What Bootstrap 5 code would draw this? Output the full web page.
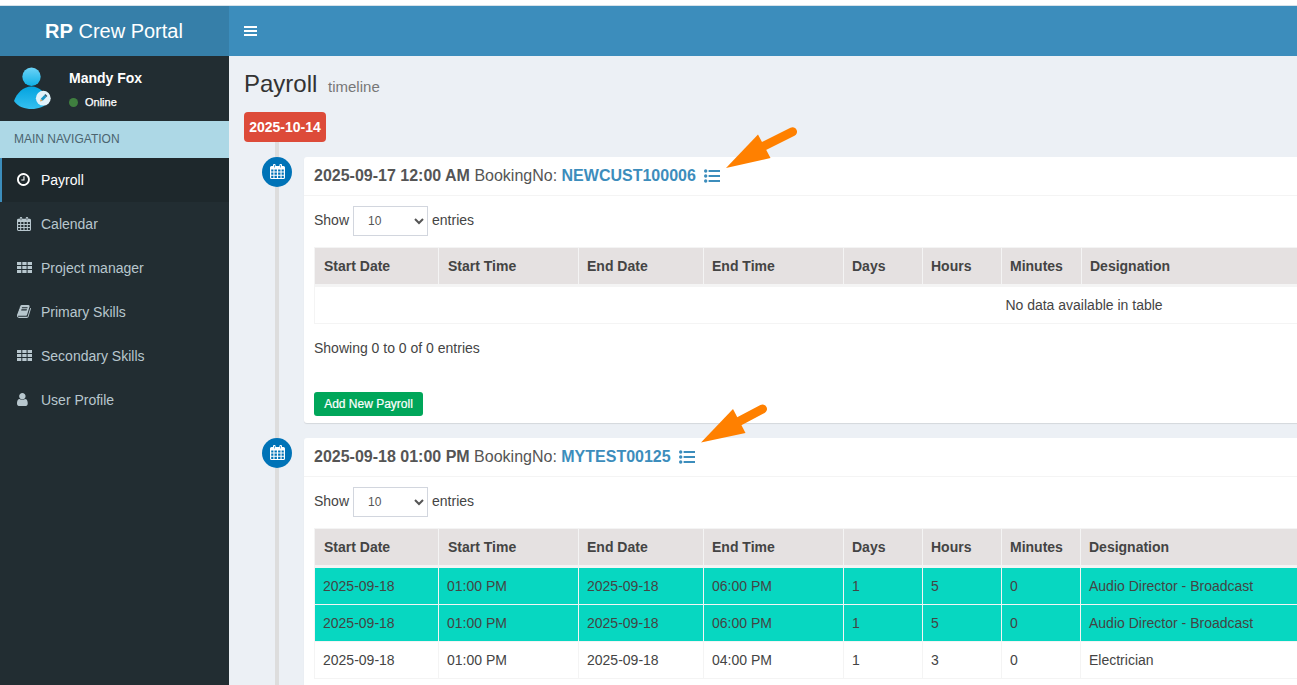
<!DOCTYPE html>
<html lang="en">
<head>
<meta charset="utf-8">
<title>RP Crew Portal</title>
<link href="https://cdn.jsdelivr.net/npm/bootstrap@5.3.0/dist/css/bootstrap.min.css" rel="stylesheet">
<style>
body{font:400 14px/20px "Liberation Sans",Arial,sans-serif;color:#444;background:#fff;height:685px;overflow:hidden;padding-top:5px}
.topbar{height:51px;background:#3c8dbc;border-top:1px solid #d6e2ea;flex:none}
.brand{width:229px;background:#367fa9;font-size:20px;color:#fff;padding-right:1px}
.toggler{padding-left:15px}
.side{width:229px;background:#222d32}
.userbox{height:65px;padding-left:13px}
.who{margin-left:18px;padding-top:12px}
.who strong{display:block;color:#fff;line-height:20px}
.who small{font-size:11px;color:#fff;-webkit-text-stroke:.25px #fff;line-height:14px;margin-top:7px}
.dot{width:9px;height:9px;background:#3f7f3f;border-radius:50%;margin-right:7px}
.navhead{height:37px;background:#add8e6;color:#4b646f;font-size:12px;padding:0 14px 2px}
.side .nav-link{height:44px;color:#b8c7ce;padding:0 13px;border-left:2px solid transparent}
.side .nav-link.active{background:#1e282c;border-color:#3c8dbc;color:#fff}
.side svg{width:15px;height:15px;margin:-1px 9px 0 2px;fill:currentColor}
.page{background:#ecf0f5;overflow:hidden;padding:0 0 0 15px;min-width:0}
.page h1{font-size:24px;line-height:26px;color:#333;margin:15px 0}
.page h1 small{font-size:15px;color:#777;margin-left:4px}
.tl{width:1650px;position:relative;margin-top:-3px}
.tl::before{content:"";position:absolute;left:31px;top:0;bottom:-200px;width:4px;background:#ddd}
.daylabel{position:relative;display:inline-flex;align-items:center;justify-content:center;width:82px;height:30px;border-radius:4px;background:#dd4b39;color:#fff;font-weight:700;vertical-align:top}
.entry{position:relative;margin-top:15px;padding-left:18px}
.dotcal{width:30px;height:30px;border-radius:50%;background:#0073b7;margin-right:12px;flex:none}
.dotcal svg{width:15px;height:15px;margin:0 0 1px 1px;fill:#fff}
.box{width:1560px;background:#fff;border-radius:3px;box-shadow:0 1px 1px rgba(0,0,0,.1)}
.box h3{font-size:16px;line-height:17.6px;height:39px;margin:0;padding:10px;border-bottom:1px solid #f4f4f4;color:#555;white-space:nowrap}
.box h3 b{font-weight:700}
.box h3 a,.box h3 a:hover{color:#3c8dbc;font-weight:700;text-decoration:none}
.box h3 svg{width:16px;height:16px;fill:#3c8dbc;margin-left:4px;vertical-align:-3px}
.inner{padding:10px}
.len{height:30px}
.len span{margin-top:-2px}
.len select{width:75px;height:30px;border:1px solid #d2d6de;background:#fff;color:#555;font-size:12px;line-height:18px;padding:5px 10px 6px;margin:0 4px}
.grid{width:1540px;table-layout:fixed;border-collapse:separate;border-spacing:0;border:1px solid #f4f4f4;border-width:1px 0 0 1px;margin-top:11px}
.grid th,.grid td{height:37px;padding:0 8px;border:solid #f4f4f4;border-width:0 1px 1px 0}
.grid th{height:39px;background:#e5e1e1;background-clip:padding-box;border-bottom-width:3px}
.grid th:nth-child(-n+2){padding-left:9px}
.grid .teal td{background:#07d7c1;background-clip:padding-box}
.info{margin-top:14px}
.add{width:109px;height:24px;font-size:12px;line-height:12px;padding:0;margin-top:34px;border:0;border-radius:3px;background:#00a65a;color:#fff;display:block;-webkit-text-stroke:.2px #fff}
.pointer{position:absolute;width:72px;height:44px;fill:#ff8000}
.pointer .shaft{stroke:#ff8000;stroke-width:9;stroke-linecap:round}
</style>
<script src="https://cdn.jsdelivr.net/npm/bootstrap@5.3.0/dist/js/bootstrap.bundle.min.js"></script>
</head>
<body class="d-flex flex-column">
<svg class="d-none">
<symbol id="clock" viewBox="128 0 1792 1792"><path d="M1024 544v448q0 14-9 23t-23 9h-320q-14 0-23-9t-9-23v-64q0-14 9-23t23-9h224v-352q0-14 9-23t23-9h64q14 0 23 9t9 23zm416 352q0-148-73-273t-198-198-273-73-273 73-198 198-73 273 73 273 198 198 273 73 273-73 198-198 73-273zm224 0q0 209-103 385.5t-279.5 279.5-385.5 103-385.5-103-279.5-279.5-103-385.5 103-385.5 279.5-279.5 385.5-103 385.5 103 279.5 279.5 103 385.5z"/></symbol>
<symbol id="cal" viewBox="0 0 15 15"><path fill-rule="evenodd" d="M1.500 2H3V1a1 1 0 0 1 1-1h.6a1 1 0 0 1 1 1v1h3.800V1a1 1 0 0 1 1-1h.6a1 1 0 0 1 1 1v1h1.500A1.500 1.500 0 0 1 15 3.500v10a1.500 1.500 0 0 1-1.500 1.500h-12A1.500 1.500 0 0 1 0 13.500v-10A1.500 1.500 0 0 1 1.500 2zM4 1v2.500h.6V1zM10.400 1v2.500h.6V1zM1.200 5.400v2.100h2.200V5.400zM4.500 5.400v2.100h2.400V5.400zM8.100 5.400v2.100h2.400V5.400zM11.600 5.400v2.100h2.200V5.400zM1.200 8.500v2.200h2.200V8.500zM4.500 8.500v2.200h2.400V8.500zM8.100 8.500v2.200h2.400V8.500zM11.600 8.500v2.200h2.200V8.500zM1.200 11.700v2.200h2.200v-2.200zM4.500 11.700v2.200h2.400v-2.200zM8.100 11.700v2.200h2.400v-2.200zM11.600 11.700v2.200h2.200v-2.200z"/></symbol>
<symbol id="th" viewBox="0 0 15 15"><path d="M0 2h4.300v3H0zM5.300 2h4.300v3H5.300zM10.600 2H15v3h-4.400zM0 6h4.300v3H0zM5.300 6h4.300v3H5.300zM10.600 6H15v3h-4.400zM0 10h4.300v3H0zM5.300 10h4.300v3H5.300zM10.600 10H15v3h-4.400z"/></symbol>
<symbol id="book" viewBox="64 0 1792 1792"><path d="M1703 478q40 57 18 129l-275 906q-19 64-76.500 107.500t-122.500 43.500h-923q-77 0-148.500-53.500t-99.500-131.500q-24-67-2-127 0-4 3-27t4-37q1-8-3-21.500t-3-19.500q2-11 8-21t16.500-23.500 16.500-23.500q23-38 45-91.500t30-91.500q3-10 .5-30t-.5-28q3-11 17-28t17-23q21-36 42-92t25-90q1-9-2.500-32t.5-28q4-13 22-30.500t22-22.500q19-26 42.500-84.500t27.500-96.500q1-8-3-25.500t-2-26.500q2-8 9-18t18-23 17-21q8-12 16.500-30.500t15-35 16-36 19.500-32 26.500-23.500 36-11.500 47.500 5.500l-1 3q38-9 51-9h761q74 0 114 56t18 130l-274 906q-36 119-71.500 153.500t-128.500 34.500h-869q-27 0-38 15-11 16-1 43 24 70 144 70h923q29 0 56-15.500t35-41.500l300-987q7-22 5-57 38 15 59 43zm-1064 2q-4 13 2 22.500t20 9.500h608q13 0 25.500-9.500t16.500-22.500l21-64q4-13-2-22.500t-20-9.500h-608q-13 0-25.500 9.500t-16.500 22.500zm-83 256q-4 13 2 22.500t20 9.500h608q13 0 25.500-9.500t16.500-22.500l21-64q4-13-2-22.500t-20-9.500h-608q-13 0-25.500 9.500t-16.500 22.500z"/></symbol>
<symbol id="user" viewBox="256 0 1792 1792"><path d="M1536 1399q0 109-62.500 187t-150.500 78h-854q-88 0-150.500-78t-62.500-187q0-85 8.500-160.500t31.500-152 58.500-131 94-89 134.500-34.500q131 128 313 128t313-128q76 0 134.500 34.500t94 89 58.500 131 31.500 152 8.500 160.500zm-256-887q0 159-112.500 271.500t-271.500 112.500-271.500-112.500-112.500-271.500 112.500-271.500 271.500-112.500 271.500 112.500 112.500 271.500z"/></symbol>
<symbol id="list" viewBox="0 0 16 16"><circle cx="1.700" cy="3" r="1.700"/><circle cx="1.700" cy="8" r="1.700"/><circle cx="1.700" cy="13" r="1.700"/><path d="M4.600 2H16v2H4.600zM4.600 7H16v2H4.600zM4.600 12H16v2H4.600z"/></symbol>
</svg>
<header class="topbar d-flex">
<div class="brand d-flex align-items-center justify-content-center"><span><b>RP</b> Crew Portal</span></div>
<div class="toggler d-flex align-items-center"><svg width="13" height="10" fill="#fff"><path d="M0 0h13v2H0zM0 4h13v2H0zM0 8h13v2H0z"/></svg></div>
</header>
<div class="d-flex flex-grow-1" style="min-height:0">
<aside class="side flex-shrink-0">
<div class="userbox d-flex">
<svg class="m-0 mt-2" style="width:38px;height:48px" viewBox="0 0 38 48">
<defs><linearGradient id="g1" x1="0" y1="0" x2="0" y2="1"><stop offset="0" stop-color="#6cd3f7"/><stop offset="1" stop-color="#0fb0e6"/></linearGradient><linearGradient id="g2" x1="0" y1="0" x2="0" y2="1"><stop offset="0" stop-color="#03a3df"/><stop offset="1" stop-color="#35c0f0"/></linearGradient></defs>
<circle cx="18.500" cy="12.800" r="9.200" fill="url(#g1)"/><path d="M1 37C4 29 10 22.500 18.500 22.500S32 29 36 37C32 43 25 45 18.500 45S5 43 1 37z" fill="url(#g2)"/>
<circle cx="30.300" cy="34.200" r="7.400" fill="#e2f2fa"/><path d="M27 37.500l.8-2.800 2 2z" fill="#d9a35c"/><path d="M27.800 34.700l3.600-3.600 2 2-3.600 3.600z" fill="#1795c7"/><path d="M31.400 31.100l1-1 2 2-1 1z" fill="#35566a"/></svg>
<div class="who"><strong>Mandy Fox</strong><small class="d-flex align-items-center"><span class="dot"></span>Online</small></div>
</div>
<div class="navhead d-flex align-items-center">MAIN NAVIGATION</div>
<nav class="nav flex-column">
<a class="nav-link active d-flex align-items-center"><svg><use href="#clock"/></svg><span>Payroll</span></a>
<a class="nav-link d-flex align-items-center"><svg><use href="#cal" y="1" width="14" height="14"/></svg><span>Calendar</span></a>
<a class="nav-link d-flex align-items-center"><svg><use href="#th"/></svg><span>Project manager</span></a>
<a class="nav-link d-flex align-items-center"><svg><use href="#book"/></svg><span>Primary Skills</span></a>
<a class="nav-link d-flex align-items-center"><svg><use href="#th"/></svg><span>Secondary Skills</span></a>
<a class="nav-link d-flex align-items-center"><svg><use href="#user"/></svg><span>User Profile</span></a>
</nav>
</aside>
<main class="page flex-grow-1">
<h1>Payroll <small>timeline</small></h1>
<div class="tl">
<div class="daylabel">2025-10-14</div>
<section class="entry d-flex">
<div class="dotcal d-flex align-items-center justify-content-center"><svg><use href="#cal"/></svg></div>
<div class="box" style="height:266px">
<h3><b>2025-09-17 12:00 AM</b> BookingNo: <a href="#">NEWCUST100006</a> <svg><use href="#list"/></svg></h3>
<div class="inner">
<div class="len d-flex align-items-center"><span>Show</span><select><option>10</option></select><span>entries</span></div>
<table class="grid">
<colgroup><col style="width:124px"><col style="width:140px"><col style="width:125px"><col style="width:140px"><col style="width:79px"><col style="width:79px"><col style="width:80px"><col></colgroup>
<thead><tr><th>Start Date</th><th>Start Time</th><th>End Date</th><th>End Time</th><th>Days</th><th>Hours</th><th>Minutes</th><th>Designation</th></tr></thead>
<tbody><tr><td colspan="8" class="text-center">No data available in table</td></tr></tbody>
</table>
<div class="info">Showing 0 to 0 of 0 entries</div>
<button class="btn add">Add New Payroll</button>
</div></div>
<svg class="pointer" style="left:482px;top:-30px"><path d="M0 41 32 7.500 44.500 31z"/><path class="shaft" d="M34 21 66.500 4.800"/></svg>
</section>
<section class="entry d-flex">
<div class="dotcal d-flex align-items-center justify-content-center"><svg><use href="#cal"/></svg></div>
<div class="box" style="height:400px">
<h3><b>2025-09-18 01:00 PM</b> BookingNo: <a href="#">MYTEST00125</a> <svg><use href="#list"/></svg></h3>
<div class="inner">
<div class="len d-flex align-items-center"><span>Show</span><select><option>10</option></select><span>entries</span></div>
<table class="grid">
<colgroup><col style="width:124px"><col style="width:140px"><col style="width:125px"><col style="width:140px"><col style="width:79px"><col style="width:79px"><col style="width:79px"><col></colgroup>
<thead><tr><th>Start Date</th><th>Start Time</th><th>End Date</th><th>End Time</th><th>Days</th><th>Hours</th><th>Minutes</th><th>Designation</th></tr></thead>
<tbody>
<tr class="teal"><td>2025-09-18</td><td>01:00 PM</td><td>2025-09-18</td><td>06:00 PM</td><td>1</td><td>5</td><td>0</td><td>Audio Director - Broadcast</td></tr>
<tr class="teal"><td>2025-09-18</td><td>01:00 PM</td><td>2025-09-18</td><td>06:00 PM</td><td>1</td><td>5</td><td>0</td><td>Audio Director - Broadcast</td></tr>
<tr><td>2025-09-18</td><td>01:00 PM</td><td>2025-09-18</td><td>04:00 PM</td><td>1</td><td>3</td><td>0</td><td>Electrician</td></tr>
</tbody>
</table>
</div></div>
<svg class="pointer" style="left:457px;top:-37px"><path d="M0 41.500 32 8 44.500 32z"/><path class="shaft" d="M34 22.500 61.500 8"/></svg>
</section>
</div>
</main>
</div>
</body>
</html>
